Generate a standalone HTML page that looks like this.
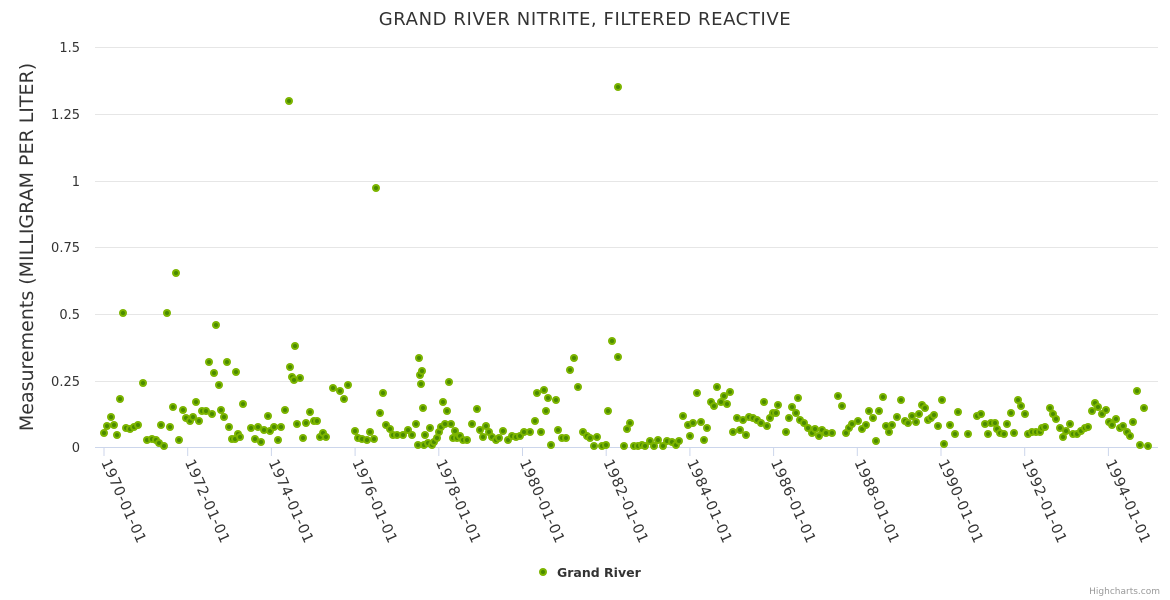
<!DOCTYPE html>
<html><head><meta charset="utf-8"><style>
html,body{margin:0;padding:0;background:#fff;width:1170px;height:600px;overflow:hidden}
svg{display:block;font-family:"DejaVu Sans","Liberation Sans",sans-serif}
</style></head><body>
<svg id="c" width="1170" height="600" xmlns="http://www.w3.org/2000/svg">
<rect width="1170" height="600" fill="#fff"/>
<text x="585" y="25" text-anchor="middle" font-size="18" letter-spacing="0.6" fill="#333">GRAND RIVER NITRITE, FILTERED REACTIVE</text>
<g stroke="#e6e6e6" stroke-width="1">
<line x1="95" x2="1158" y1="47.5" y2="47.5"/>
<line x1="95" x2="1158" y1="114.5" y2="114.5"/>
<line x1="95" x2="1158" y1="181.5" y2="181.5"/>
<line x1="95" x2="1158" y1="247.5" y2="247.5"/>
<line x1="95" x2="1158" y1="314.5" y2="314.5"/>
<line x1="95" x2="1158" y1="381.5" y2="381.5"/>
</g>
<line x1="95" x2="1158" y1="447.5" y2="447.5" stroke="#ccd6eb"/>
<g font-size="13" fill="#333" text-anchor="end">
<text x="80" y="52">1.5</text>
<text x="80" y="119">1.25</text>
<text x="80" y="186">1</text>
<text x="80" y="252">0.75</text>
<text x="80" y="319">0.5</text>
<text x="80" y="386">0.25</text>
<text x="80" y="452">0</text>
</g>
<text transform="translate(33,247) rotate(-90)" text-anchor="middle" font-size="19" fill="#333">Measurements (MILLIGRAM PER LITER)</text>
<g id="ticks"></g>
<g id="pts"></g>
<circle cx="543" cy="572" r="4" fill="#7cb500"/><circle cx="543" cy="572" r="2" fill="#4a8a00"/>
<text x="557" y="577" font-size="12.5" font-weight="bold" fill="#333">Grand River</text>
<text x="1160" y="594" text-anchor="end" font-size="9" fill="#999">Highcharts.com</text>
</svg>
<script>
var ns="http://www.w3.org/2000/svg";
var tg=document.getElementById("ticks");
for(var i=0;i<13;i++){var x=104+i*83.7;
var l=document.createElementNS(ns,"line");l.setAttribute("x1",x);l.setAttribute("x2",x);l.setAttribute("y1",448);l.setAttribute("y2",456);l.setAttribute("stroke","#ccd6eb");tg.appendChild(l);
var t=document.createElementNS(ns,"text");var tx=x-3,ty=462;t.setAttribute("x",tx);t.setAttribute("y",ty);t.setAttribute("font-size","14.5");t.setAttribute("letter-spacing","0.6");t.setAttribute("fill","#333");t.setAttribute("transform","rotate(66,"+tx+","+ty+")");t.textContent=(1970+2*i)+"-01-01";tg.appendChild(t);}
var P=[104,433,107,426,111,417,114,425,117,435,120,399,123,313,126,428,130,429,134,427,138,425,143,383,147,440,152,439,156,440,159,443,161,425,164,446,167,313,170,427,173,407,176,273,179,440,183,410,186,418,190,421,193,417,196,402,199,421,202,411,206,411,209,362,212,414,214,373,216,325,219,385,221,410,224,417,227,362,229,427,232,439,235,439,236,372,238,434,240,437,243,404,251,428,255,439,258,427,261,442,264,430,268,416,270,431,274,427,278,440,281,427,285,410,289,101,290,367,292,377,294,380,295,346,297,424,300,378,303,438,306,423,310,412,314,421,317,421,320,437,323,433,326,437,333,388,340,391,344,399,348,385,355,431,358,438,362,439,367,440,370,432,374,439,376,188,380,413,383,393,386,425,390,429,393,435,397,435,403,435,408,430,412,435,416,424,418,445,419,358,420,375,421,384,422,371,423,408,424,445,425,435,428,443,430,428,432,445,434,442,437,438,439,432,441,427,443,402,445,424,447,411,449,382,451,424,453,438,455,431,457,438,460,436,463,440,467,440,472,424,477,409,480,430,483,437,486,426,489,432,492,437,496,440,499,438,503,431,508,440,512,436,516,437,520,436,524,432,530,432,535,421,537,393,541,432,544,390,546,411,548,398,551,445,556,400,558,430,562,438,566,438,570,370,574,358,578,387,583,432,587,436,590,438,594,446,597,437,602,446,606,445,608,411,612,341,618,87,618,357,624,446,627,429,630,423,634,446,638,446,642,445,645,446,650,441,654,446,658,440,663,446,667,441,672,442,676,445,679,441,683,416,688,425,690,436,693,423,697,393,701,422,704,440,707,428,711,402,714,406,717,387,721,402,724,396,727,404,730,392,733,432,737,418,740,430,743,420,746,435,749,417,753,418,757,420,761,423,764,402,767,426,770,418,773,413,776,413,778,405,786,432,789,418,792,407,796,413,798,398,800,420,804,423,808,428,812,433,815,429,819,436,822,430,826,433,832,433,838,396,842,406,846,433,849,428,852,424,858,421,862,429,866,425,869,411,873,418,876,441,879,411,883,397,886,426,889,432,892,425,897,417,901,400,905,421,908,423,912,416,916,422,919,414,922,405,925,408,928,420,931,418,934,415,938,426,942,400,944,444,950,425,955,434,958,412,968,434,977,416,981,414,985,424,988,434,991,423,995,423,997,429,1000,433,1004,434,1007,424,1011,413,1014,433,1018,400,1021,406,1025,414,1028,434,1032,432,1036,432,1040,432,1042,428,1045,427,1050,408,1053,414,1056,419,1060,428,1063,437,1066,431,1070,424,1073,434,1077,434,1081,431,1085,428,1088,427,1092,411,1095,403,1098,407,1102,414,1106,410,1109,422,1112,425,1116,419,1120,428,1123,426,1127,432,1130,436,1133,422,1137,391,1140,445,1144,408,1148,446];
var g=document.getElementById("pts"),h="";
for(var k=0;k<P.length;k+=2){h+='<circle cx="'+P[k]+'" cy="'+P[k+1]+'" r="4" fill="#7cb500"/><circle cx="'+P[k]+'" cy="'+P[k+1]+'" r="2" fill="#4a8a00"/>';}
g.innerHTML=h;
</script>
</body></html>
